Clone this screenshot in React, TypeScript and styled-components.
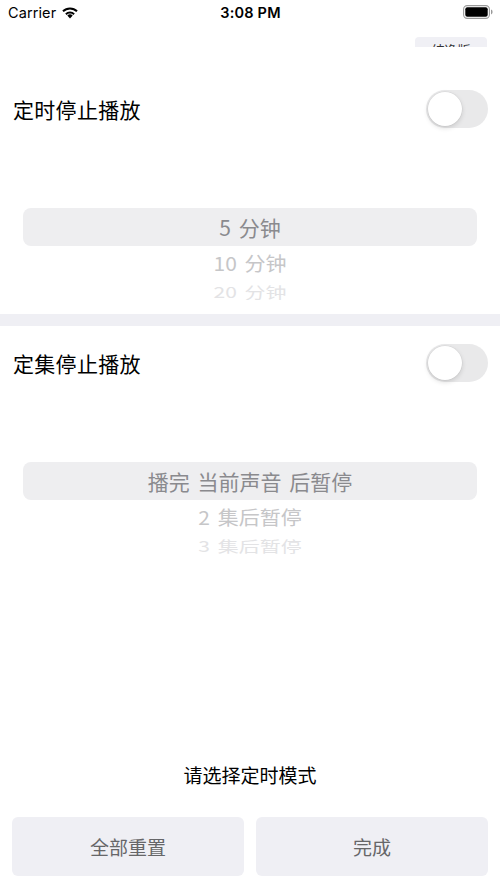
import React from "react";
import styled, { createGlobalStyle } from "styled-components";

const GlobalStyle = createGlobalStyle`
  html, body { margin: 0; padding: 0; background: #ffffff; }
  body { font-family: "Noto Sans CJK SC", "Noto Sans", sans-serif; -webkit-font-smoothing: antialiased; }
  * { box-sizing: border-box; }
`;

const Screen = styled.div`
  width: 500px;
  height: 889px;
  display: flex;
  flex-direction: column;
  background: #ffffff;
  overflow: hidden;
`;

const StatusBar = styled.div`
  height: 24px;
  flex: none;
  display: grid;
  grid-template-columns: 1fr auto 1fr;
  align-items: center;
  padding: 0 7px 0 8px;
  font-family: "Inter", "Liberation Sans", sans-serif;
  font-size: 14.5px;
  color: #000;
`;

const Carrier = styled.div`
  display: flex;
  align-items: center;
  gap: 5px;
  letter-spacing: 0.1px;
`;

const Time = styled.div`
  font-weight: 600;
  letter-spacing: 0.2px;
`;

const BatteryWrap = styled.div`
  justify-self: end;
  display: flex;
  align-items: center;
`;

const TopBar = styled.div`
  height: 23px;
  flex: none;
  overflow: hidden;
  display: flex;
  justify-content: flex-end;
  padding: 13px 13px 0 0;
`;

const EditionButton = styled.div`
  width: 72px;
  height: 24px;
  flex: none;
  border-radius: 4px;
  background: #f0f0f5;
  color: #333;
  font-size: 13px;
  display: flex;
  align-items: center;
  justify-content: center;
  padding-top: 1px;
`;

const Section = styled.section<{ $padTop?: number }>`
  flex: none;
  padding-top: ${(p) => p.$padTop ?? 0}px;
  padding-bottom: 14px;
  display: flex;
  flex-direction: column;
`;

const TitleRow = styled.div`
  height: 74px;
  display: flex;
  align-items: center;
  justify-content: space-between;
  padding: 0 12px 0 13px;
`;

const Title = styled.div`
  font-size: 21px;
  color: #000;
  letter-spacing: 0.3px;
`;

const SwitchTrack = styled.div`
  width: 62px;
  height: 38px;
  border-radius: 19px;
  background: #e9e9ea;
  padding: 2px;
  display: flex;
  align-items: center;
`;

const SwitchKnob = styled.div`
  width: 34px;
  height: 34px;
  border-radius: 50%;
  background: #ffffff;
  box-shadow: 0 2px 5px rgba(0, 0, 0, 0.14), 0 0 0 0.5px rgba(0, 0, 0, 0.06);
`;

const Picker = styled.div`
  height: 154px;
  overflow: hidden;
  padding-top: 62px;
  display: flex;
  flex-direction: column;
`;

const levels = [
  { h: 38, color: "#8a8a8e", scale: 1 },
  { h: 34, color: "#c6c6c8", scale: 0.92 },
  { h: 24, color: "#e3e3e5", scale: 0.72 },
];

const PickerItem = styled.div<{ $level: number }>`
  flex: none;
  height: ${(p) => levels[p.$level].h}px;
  margin: 0 23px;
  border-radius: ${(p) => (p.$level === 0 ? 8 : 0)}px;
  background: ${(p) => (p.$level === 0 ? "#eeeef0" : "transparent")};
  display: flex;
  align-items: center;
  justify-content: center;
  font-size: 21px;
  word-spacing: 3px;
  color: ${(p) => levels[p.$level].color};
  & > span {
    display: inline-block;
    transform: scaleY(${(p) => levels[p.$level].scale});
    white-space: pre;
  }
`;

const Band = styled.div`
  height: 12px;
  flex: none;
  background: #efeff4;
`;

const Spacer = styled.div`
  flex: 1;
`;

const Prompt = styled.div`
  height: 26px;
  flex: none;
  display: flex;
  align-items: center;
  justify-content: center;
  font-size: 19px;
  color: #000;
  margin-bottom: 30px;
`;

const ButtonRow = styled.div`
  flex: none;
  display: grid;
  grid-template-columns: 1fr 1fr;
  gap: 12px;
  padding: 0 12px 13px;
`;

const ActionButton = styled.div`
  height: 59px;
  border-radius: 6px;
  background: #efeff4;
  color: #666668;
  font-size: 19px;
  display: flex;
  align-items: center;
  justify-content: center;
`;

const WifiIcon = () => (
  <svg width="18" height="13" viewBox="0 0 18 13">
    <path d="M9 12.6 L6.3 9.6 A3.9 3.9 0 0 1 11.7 9.6 Z" fill="#000" />
    <path d="M4.2 7.4 A6.9 6.9 0 0 1 13.8 7.4 L12.4 8.9 A4.9 4.9 0 0 0 5.6 8.9 Z" fill="#000" />
    <path d="M1.3 4.6 A10.9 10.9 0 0 1 16.7 4.6 L15.3 6.1 A8.9 8.9 0 0 0 2.7 6.1 Z" fill="#000" />
  </svg>
);

const BatteryIcon = () => (
  <svg width="30" height="14" viewBox="0 0 30 14">
    <rect x="0.6" y="0.6" width="25.8" height="12.8" rx="3.6" fill="none" stroke="#9a9a9a" strokeWidth="1.1" />
    <rect x="2.3" y="2.3" width="22.4" height="9.4" rx="2" fill="#000" />
    <path d="M28 4.6 Q29.6 5 29.6 7 Q29.6 9 28 9.4 Z" fill="#9a9a9a" />
  </svg>
);

const Switch = () => (
  <SwitchTrack>
    <SwitchKnob />
  </SwitchTrack>
);

type SectionData = { title: string; items: string[]; padTop?: number };

const sections: SectionData[] = [
  { title: "定时停止播放", items: ["5 分钟", "10 分钟", "20 分钟"], padTop: 25 },
  { title: "定集停止播放", items: ["播完 当前声音 后暂停", "2 集后暂停", "3 集后暂停"] },
];

const TimerSection = ({ title, items, padTop }: SectionData) => (
  <Section $padTop={padTop}>
    <TitleRow>
      <Title>{title}</Title>
      <Switch />
    </TitleRow>
    <Picker>
      {items.map((it, i) => (
        <PickerItem key={it} $level={i}>
          <span>{it}</span>
        </PickerItem>
      ))}
    </Picker>
  </Section>
);

export default function App() {
  return (
    <>
      <GlobalStyle />
      <Screen>
        <StatusBar>
          <Carrier>
            Carrier
            <WifiIcon />
          </Carrier>
          <Time>3:08 PM</Time>
          <BatteryWrap>
            <BatteryIcon />
          </BatteryWrap>
        </StatusBar>
        <TopBar>
          <EditionButton>纯净版</EditionButton>
        </TopBar>
        <TimerSection {...sections[0]} />
        <Band />
        <TimerSection {...sections[1]} />
        <Spacer />
        <Prompt>请选择定时模式</Prompt>
        <ButtonRow>
          <ActionButton>全部重置</ActionButton>
          <ActionButton>完成</ActionButton>
        </ButtonRow>
      </Screen>
    </>
  );
}
